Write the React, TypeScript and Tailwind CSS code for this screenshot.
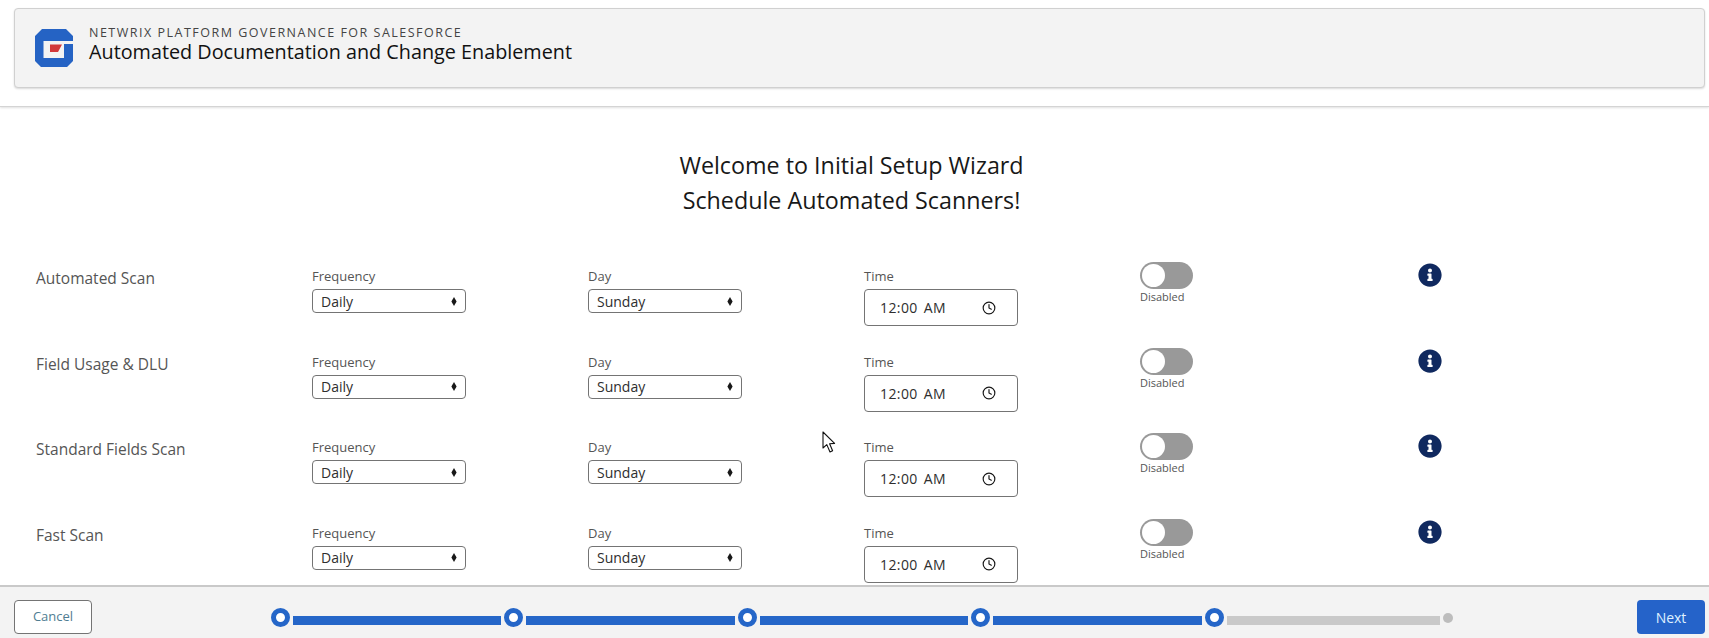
import { Clock } from "lucide-react";
import { FaInfoCircle } from "react-icons/fa";

const scanners = ["Automated Scan", "Field Usage & DLU", "Standard Fields Scan", "Fast Scan"];

function Logo() {
  return (
    <svg width="38" height="38" viewBox="0 0 38 38" className="shrink-0">
      <path d="M7 0H31L38 7V12H8.5V29H29V15H38V32L32 38H6L0 32V7Z" fill="#2563c4" />
      <path d="M15 15.5H27L23 23H15Z" fill="#d2393a" />
    </svg>
  );
}

function SelectBox({ value }: { value: string }) {
  return (
    <div className="flex h-[24px] w-[154px] items-center justify-between rounded-[4px] border border-[#747474] bg-white pl-[8px] pr-[8px] text-[14px] text-[#2e2e2e]">
      <span>{value}</span>
      <svg width="6" height="9" viewBox="0 0 6 9">
        <path d="M3 0L5.6 4.5L3 9L0.4 4.5Z" fill="#181818" />
      </svg>
    </div>
  );
}

function Field({ label, value }: { label: string; value: string }) {
  return (
    <div className="flex flex-col pt-[6px]">
      <div className="mb-[5px] h-[16px] text-[13px] leading-[16px] text-[#555]">{label}</div>
      <SelectBox value={value} />
    </div>
  );
}

function TimeField() {
  return (
    <div className="flex flex-col pt-[6px]">
      <div className="mb-[5px] h-[16px] text-[13px] leading-[16px] text-[#555]">Time</div>
      <div className="flex h-[37px] w-[154px] items-center rounded-[4px] border border-[#747474] bg-white pl-[15px] text-[14px] tracking-[0.4px] text-[#2e2e2e]">
        <span>12:00</span>
        <span className="ml-[6px]">AM</span>
        <Clock size={14} strokeWidth={2} className="ml-[36px] text-[#181818]" />
      </div>
    </div>
  );
}

function ScannerRow({ name }: { name: string }) {
  return (
    <div className="grid h-[85.5px] grid-cols-[276px_276px_276px_276px_276px_auto]">
      <div className="pt-[6px] text-[15.5px] leading-[20px] text-[#555]">{name}</div>
      <Field label="Frequency" value="Daily" />
      <Field label="Day" value="Sunday" />
      <TimeField />
      <div className="flex flex-col">
        <div className="flex h-[27px] w-[53px] items-center rounded-full bg-[#999] pl-[2px]">
          <div className="h-[23px] w-[23px] rounded-full bg-white" />
        </div>
        <div className="mt-[1px] text-[11px] leading-[14px] text-[#555]">Disabled</div>
      </div>
      <div className="pl-[2px] pt-[1px]">
        <FaInfoCircle size={24} className="text-[#10295f]" />
      </div>
    </div>
  );
}

function Step() {
  return <div className="h-[19px] w-[19px] shrink-0 -translate-y-[3px] rounded-full border-[5px] border-[#2566c8] bg-white" />;
}

function Progress() {
  return (
    <div className="ml-[179px] flex h-[34px] items-center pt-[7px]">
      {[0, 1, 2, 3].map((i) => (
        <div key={i} className="flex items-center">
          <Step />
          <div className="mx-[3px] h-[9px] w-[208.4px] bg-[#2566c8]" />
        </div>
      ))}
      <Step />
      <div className="ml-[3px] h-[9px] w-[213px] bg-[#c9c9c9]" />
      <div className="ml-[3px] h-[10px] w-[10px] -translate-y-[3px] rounded-full bg-[#bdbdbd]" />
    </div>
  );
}

export default function App() {
  return (
    <div className="relative flex h-screen flex-col overflow-hidden bg-white font-['Open_Sans','Noto_Sans',sans-serif]">
      <header className="h-[107px] shrink-0 border-b border-[#d4d4d4] pl-[14px] pr-[4px] pt-[8px] shadow-[0_1px_2px_rgba(0,0,0,0.12)]">
        <div className="flex h-[80px] items-center rounded-[4px] border border-[#d0d0d0] bg-[#f3f3f3] pl-[20px] shadow-[0_1px_2px_rgba(0,0,0,0.15)]">
          <Logo />
          <div className="ml-[16px] -mt-[7px]">
            <div className="text-[12.5px] leading-[15px] tracking-[1.5px] text-[#444]">NETWRIX PLATFORM GOVERNANCE FOR SALESFORCE</div>
            <div className="text-[19.8px] leading-[24px] font-medium text-[#111]">Automated Documentation and Change Enablement</div>
          </div>
        </div>
      </header>

      <main className="min-h-0 flex-1 overflow-hidden pl-[36px]">
        <div className="mt-[41px] -ml-[36px] pr-[6px] text-center text-[23.3px] leading-[34.5px] text-[#181818]">
          <div>Welcome to Initial Setup Wizard</div>
          <div>Schedule Automated Scanners!</div>
        </div>
        <div className="mt-[45px]">
          {scanners.map((name) => (
            <ScannerRow key={name} name={name} />
          ))}
        </div>
      </main>

      <footer className="flex h-[53px] shrink-0 items-start border-t-2 border-[#c9c9c9] bg-[#f3f3f3] pl-[14px] pr-[4px] pt-[13px]">
        <button className="h-[34px] w-[78px] rounded-[4px] border border-[#747474] bg-white text-[13px] text-[#4f7d92]">Cancel</button>
        <Progress />
        <button className="ml-auto h-[34px] w-[68px] rounded-[4px] bg-[#2563c9] text-[14px] text-[#dff1ff]">Next</button>
      </footer>

      <svg width="14" height="23" viewBox="0 0 14 23" className="absolute left-[822px] top-[431px]">
        <path d="M1 1V17L4.8 13.6L8 21L10.6 19.8L7.6 12.8L12.6 12.4Z" fill="#fff" stroke="#111" strokeWidth="1.1" strokeLinejoin="round" />
      </svg>
    </div>
  );
}
